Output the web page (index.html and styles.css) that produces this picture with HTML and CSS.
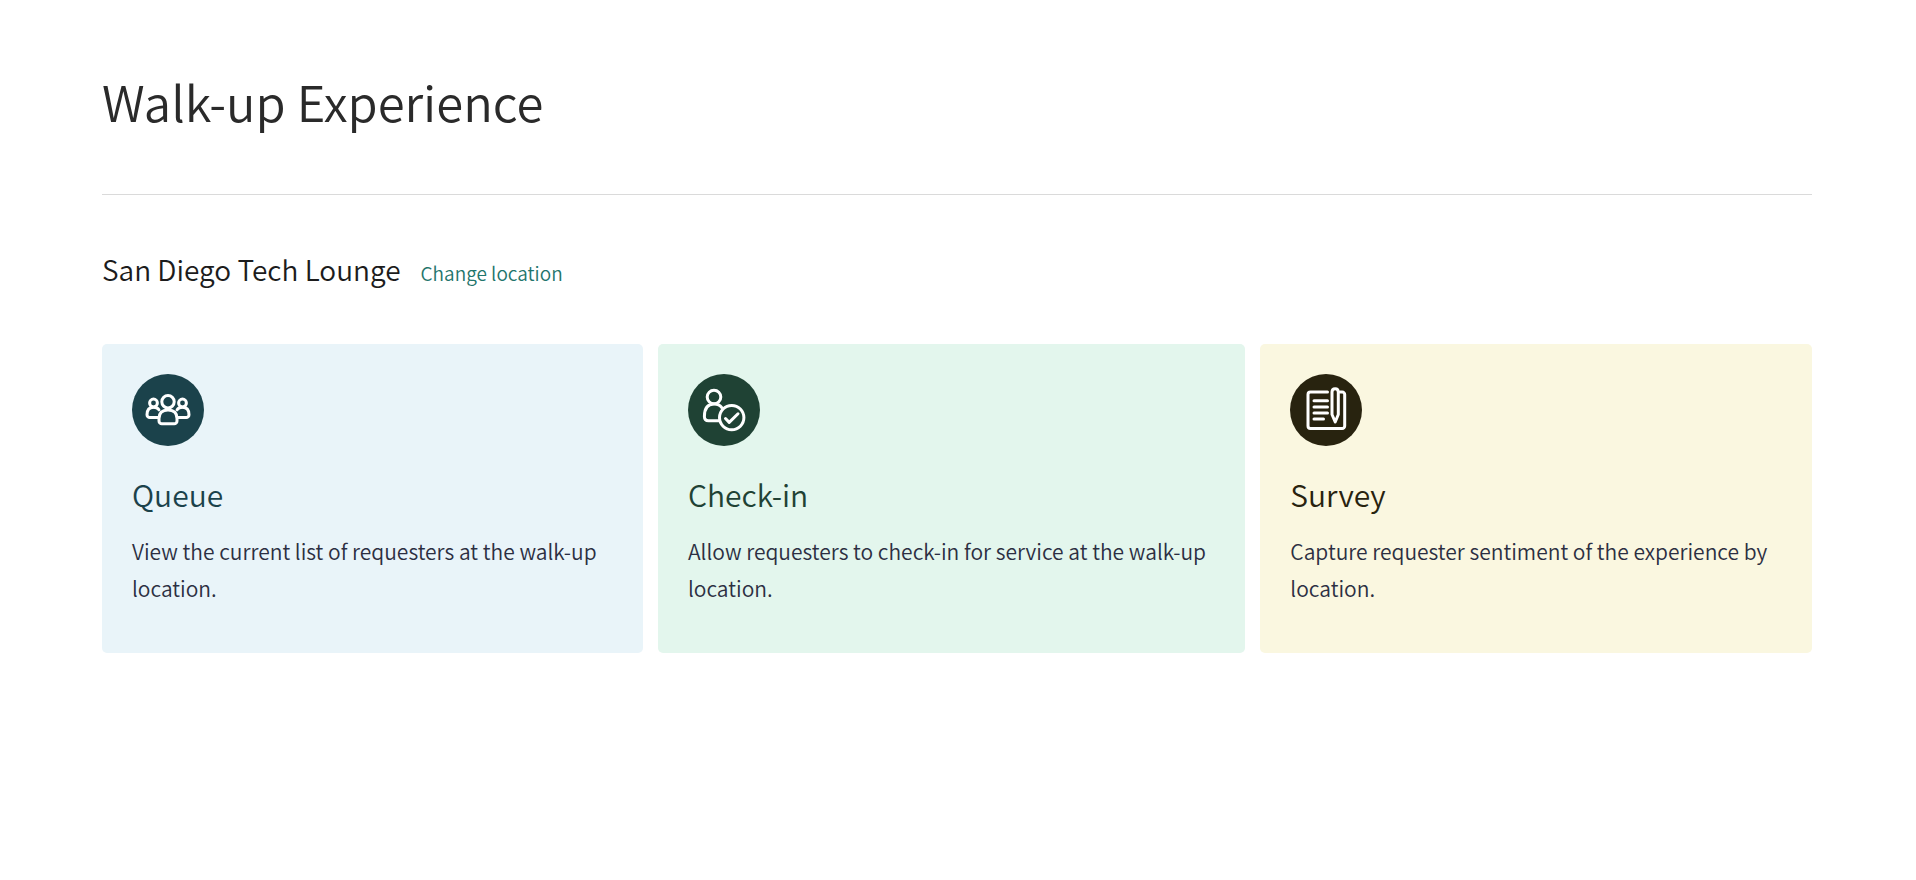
FILE: index.html
```html
<!DOCTYPE html>
<html lang="en">
<head>
<meta charset="utf-8">
<title>Walk-up Experience</title>
<link rel="stylesheet" href="styles.css">
</head>
<body>
<main class="page">
  <header class="page-header">
    <h1 class="page-title">Walk-up Experience</h1>
  </header>
  <section class="location">
    <h2 class="location-name">San Diego Tech Lounge</h2>
    <a class="location-link" href="#">Change location</a>
  </section>
  <section class="cards">
    <a class="card card-queue" href="#">
      <svg class="card-icon" viewBox="0 0 72 72" aria-hidden="true">
        <circle class="disc" cx="36" cy="36" r="36"/>
        <circle cx="36" cy="27.8" r="6.200"/>
        <path d="M27 44.500C27 39 30 36 36 36s9 3 9 8.500v2.500a2.800 2.800 0 0 1-2.800 2.800H29.800A2.800 2.800 0 0 1 27 47z"/>
        <circle cx="21.500" cy="29" r="3.900"/>
        <circle cx="50.500" cy="29" r="3.900"/>
        <path d="M26.500 43.600H17.800A2.800 2.800 0 0 1 15 40.800c0-5 2-7.600 6.500-7.600 2.600 0 4.300.8 5.400 2.600"/>
        <path d="M45.500 43.600h8.700a2.800 2.800 0 0 0 2.800-2.800c0-5-2-7.600-6.500-7.600-2.600 0-4.300.8-5.400 2.600"/>
      </svg>
      <h3 class="card-title">Queue</h3>
      <p class="card-text">View the current list of requesters at the walk-up location.</p>
    </a>
    <a class="card card-checkin" href="#">
      <svg class="card-icon" viewBox="0 0 72 72" aria-hidden="true">
        <circle class="disc" cx="36" cy="36" r="36"/>
        <circle cx="26" cy="23" r="6.800"/>
        <path d="M31.500 46.800H20.500c-2.600 0-4.100-1.700-4.100-4.300C16.400 35 19.500 30 26 30c3.400 0 6.200 1.300 8 3.800"/>
        <circle cx="43.700" cy="43.600" r="12.200"/>
        <path d="M37.500 44.500 41.200 48.400 50 39.800"/>
      </svg>
      <h3 class="card-title">Check-in</h3>
      <p class="card-text">Allow requesters to check-in for service at the walk-up location.</p>
    </a>
    <a class="card card-survey" href="#">
      <svg class="card-icon" viewBox="0 0 72 72" aria-hidden="true">
        <circle class="disc" cx="36" cy="36" r="36"/>
        <path d="M37.500 18H20.500A2.500 2.500 0 0 0 18 20.500v31.400a2.500 2.500 0 0 0 2.500 2.500h31.700a2.500 2.500 0 0 0 2.500-2.500V20.500a2.500 2.500 0 0 0-2.500-2.500H50"/>
        <path d="M24 26.800h13.500M24 33h13.500M24 39h13.500M24 45h9.500"/>
        <path d="M42 18c0-4.500 6.300-4.500 6.300 0v22.500L45.200 48 42 40.500z"/>
      </svg>
      <h3 class="card-title">Survey</h3>
      <p class="card-text">Capture requester sentiment of the experience by location.</p>
    </a>
  </section>
</main>
</body>
</html>
```

FILE: styles.css
```css
* {
  box-sizing: border-box;
}

body {
  margin: 0;
  background: #fff;
  color: #2a2a2a;
  font-family: "Noto Sans CJK SC", "Noto Sans", sans-serif;
  font-weight: 350;
}

h1, h2, h3, p {
  margin: 0;
  font-weight: 350;
}

a {
  text-decoration: none;
}

.page {
  padding: 73px 104px 72px 102px;
}

.page-header {
  padding-bottom: 65px;
  border-bottom: 1px solid #dadada;
}

.page-title {
  font-size: 49px;
  line-height: 56px;
}

.location {
  display: flex;
  align-items: baseline;
  gap: 20px;
  margin: 54px 0 55px;
}

.location-name {
  color: #1c1c1c;
  font-size: 28px;
  line-height: 40px;
}

.location-link {
  color: #1f756c;
  font-size: 19px;
  line-height: 28px;
}

.cards {
  display: flex;
  gap: 15px;
}

.card {
  flex: 1 1 auto;
  padding: 30px 30px 46px;
  border-radius: 5px;
}

.card-icon {
  display: block;
  width: 72px;
  height: 72px;
  fill: none;
  stroke: #fff;
  stroke-width: 3;
  stroke-linecap: round;
  stroke-linejoin: round;
}

.disc {
  stroke: none;
}

.card-title {
  margin: 28px 0 19px;
  font-size: 30px;
  line-height: 40px;
}

.card-text {
  color: #2c2f42;
  font-size: 21px;
  line-height: 37px;
}

.card-queue {
  background: #e9f4f9;
  color: #1b424b;
}

.card-queue .disc {
  fill: #1b424b;
}

.card-checkin {
  background: #e3f6ed;
  color: #1f4234;
}

.card-checkin .disc {
  fill: #1f4234;
}

.card-survey {
  background: #faf7e0;
  color: #28230f;
}

.card-survey .disc {
  fill: #28230f;
}
```
